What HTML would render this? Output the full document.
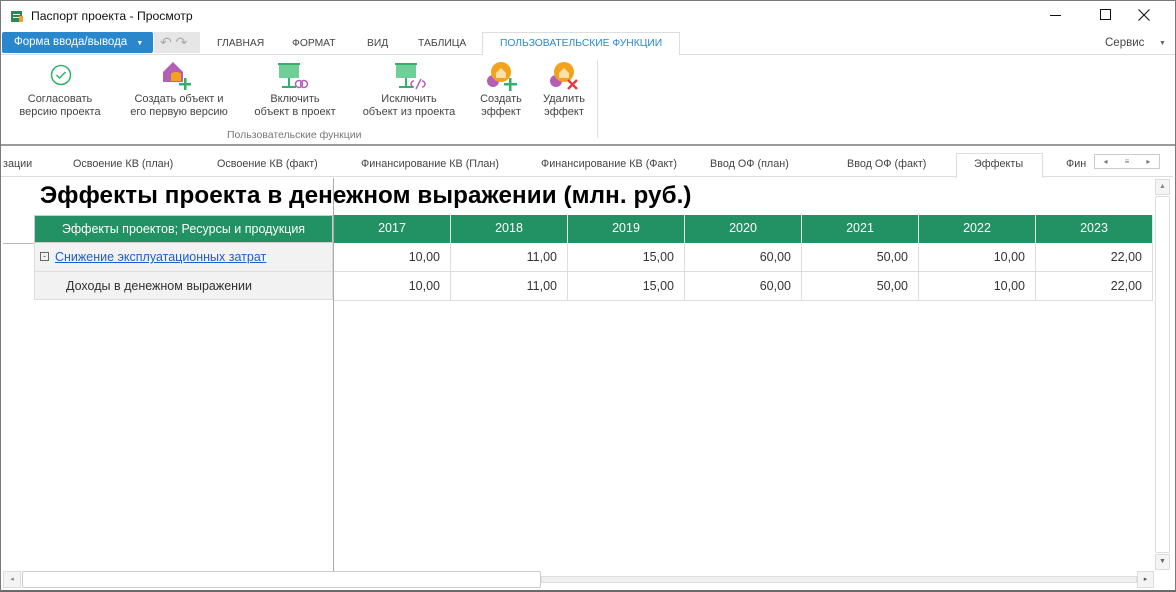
<!DOCTYPE html>
<html><head><meta charset="utf-8"><style>
*{box-sizing:border-box;margin:0;padding:0}
body{width:1176px;height:592px;overflow:hidden;background:#fff;font-family:"Liberation Sans",sans-serif;font-size:12px;color:#333;position:relative}
.a{position:absolute}
.frame{left:0;top:0;width:1176px;height:592px;border:1px solid #7a7a7a;border-bottom:2px solid #6a6a6a}
.rt{top:38px;font-size:10.3px;color:#444}
.btn{top:93px;text-align:center;font-size:11px;color:#444;line-height:13px}
.st{top:158px;font-size:10.8px;color:#444}
.hd{background:#229163;color:#fff;text-align:center;font-size:12.5px;line-height:27px;border-right:1px solid #d9ebe2;top:215px;height:28px}
.c{font-size:12.5px;text-align:right;padding-right:10px;border-right:1px solid #ddd;border-bottom:1px solid #ddd;height:29px;line-height:28px;color:#333}
</style></head><body>
<div class="a frame"></div>
<svg class="a" style="left:10px;top:9px" width="14" height="14"><rect x="1" y="2" width="11" height="11" fill="#2b8a4f"/><rect x="3" y="5" width="7" height="1" fill="#fff"/><rect x="3" y="8" width="7" height="1" fill="#fff"/><rect x="9" y="7" width="4" height="6" fill="#e8a33a"/></svg>
<div class="a" style="left:31px;top:9px;font-size:12.2px;color:#111">Паспорт проекта - Просмотр</div>
<div class="a" style="left:1050px;top:15px;width:11px;height:1px;background:#111"></div>
<div class="a" style="left:1100px;top:9px;width:11px;height:11px;border:1px solid #111"></div>
<svg class="a" style="left:1138px;top:9px" width="12" height="12"><path d="M0.5 0.5l11 11M11.5 0.5l-11 11" stroke="#111" stroke-width="1.1"/></svg>
<div class="a" style="left:2px;top:32px;width:151px;height:21px;background:#2b87cc;border-radius:2px;color:#fff;font-size:11.5px;line-height:21px;padding-left:12px">Форма ввода/вывода <span style="font-size:7px;margin-left:6px">▼</span></div>
<div class="a" style="left:154px;top:32px;width:46px;height:21px;background:#e6e6e6;color:#aaa;font-size:14px;line-height:20px;padding-left:6px">↶ ↷</div>
<div class="a rt" style="left:217px">ГЛАВНАЯ</div>
<div class="a rt" style="left:292px">ФОРМАТ</div>
<div class="a rt" style="left:367px">ВИД</div>
<div class="a rt" style="left:418px">ТАБЛИЦА</div>
<div class="a" style="left:482px;top:32px;width:198px;height:23px;border:1px solid #ddd;border-bottom:none;background:#fff"></div>
<div class="a rt" style="left:500px;color:#2b87cc">ПОЛЬЗОВАТЕЛЬСКИЕ ФУНКЦИИ</div>
<div class="a rt" style="left:1105px;font-size:11.5px;top:37px">Сервис</div>
<div class="a" style="left:1159px;top:40px;font-size:7px;color:#666">▼</div>
<div class="a" style="left:1px;top:54px;width:481px;height:1px;background:#ddd"></div>
<div class="a" style="left:680px;top:54px;width:495px;height:1px;background:#ddd"></div>
<svg class="a" style="left:50px;top:64px" width="22" height="22"><circle cx="11" cy="11" r="9.5" fill="none" stroke="#2fb36b" stroke-width="1.5"/><path d="M6.5 11l3 3 6-6" fill="none" stroke="#2fb36b" stroke-width="1.5"/></svg>
<svg class="a" style="left:162px;top:61px" width="32" height="30"><path d="M1 11L11 1l10 10v10H1z" fill="#b35fb5"/><ellipse cx="14" cy="13" rx="5" ry="2" fill="#f2a31b"/><rect x="9" y="13" width="10" height="7" fill="#f2a31b"/><rect x="22" y="17" width="2.5" height="12" fill="#2fb36b"/><rect x="17" y="22" width="12" height="2.5" fill="#2fb36b"/></svg>
<svg class="a" style="left:276px;top:63px" width="34" height="28"><rect x="2" y="0" width="22" height="2" fill="#2fb36b"/><rect x="3" y="2" width="20" height="13" fill="#6fcf97"/><rect x="12" y="15" width="2" height="9" fill="#2fb36b"/><rect x="6" y="23" width="14" height="2" fill="#2fb36b"/><circle cx="23" cy="21" r="3.5" fill="none" stroke="#b35fb5" stroke-width="1.5"/><circle cx="28" cy="21" r="3.5" fill="none" stroke="#b35fb5" stroke-width="1.5"/></svg>
<svg class="a" style="left:393px;top:63px" width="34" height="28"><rect x="2" y="0" width="22" height="2" fill="#2fb36b"/><rect x="3" y="2" width="20" height="13" fill="#6fcf97"/><rect x="12" y="15" width="2" height="9" fill="#2fb36b"/><rect x="6" y="23" width="14" height="2" fill="#2fb36b"/><path d="M21 18a3 3 0 1 0 0 6M29 18a3 3 0 1 1 0 6M23 26l5-10" fill="none" stroke="#b35fb5" stroke-width="1.5"/></svg>
<svg class="a" style="left:485px;top:60px" width="34" height="32"><circle cx="8" cy="21" r="6" fill="#b35fb5"/><circle cx="16" cy="12" r="10" fill="#f2a31b"/><path d="M11 13l5-5 5 5v5H11z" fill="#fce2a8"/><rect x="24" y="18" width="2.5" height="13" fill="#2fb36b"/><rect x="19" y="23" width="13" height="2.5" fill="#2fb36b"/></svg>
<svg class="a" style="left:548px;top:60px" width="34" height="32"><circle cx="8" cy="21" r="6" fill="#b35fb5"/><circle cx="16" cy="12" r="10" fill="#f2a31b"/><path d="M11 13l5-5 5 5v5H11z" fill="#fce2a8"/><path d="M20 20l9 9M29 20l-9 9" stroke="#e04040" stroke-width="2.5"/></svg>
<div class="a btn" style="left:10px;width:100px">Согласовать<br>версию проекта</div>
<div class="a btn" style="left:120px;width:118px">Создать объект и<br>его первую версию</div>
<div class="a btn" style="left:240px;width:110px">Включить<br>объект в проект</div>
<div class="a btn" style="left:350px;width:118px">Исключить<br>объект из проекта</div>
<div class="a btn" style="left:470px;width:62px">Создать<br>эффект</div>
<div class="a btn" style="left:533px;width:62px">Удалить<br>эффект</div>
<div class="a" style="left:227px;top:129px;font-size:10.5px;color:#777">Пользовательские функции</div>
<div class="a" style="left:597px;top:60px;width:1px;height:78px;background:#e0e0e0"></div>
<div class="a" style="left:1px;top:144px;width:1174px;height:2px;background:#9a9a9a"></div>
<div class="a st" style="left:3px">зации</div>
<div class="a st" style="left:73px">Освоение КВ (план)</div>
<div class="a st" style="left:217px">Освоение КВ (факт)</div>
<div class="a st" style="left:361px">Финансирование КВ (План)</div>
<div class="a st" style="left:541px">Финансирование КВ (Факт)</div>
<div class="a st" style="left:710px">Ввод ОФ  (план)</div>
<div class="a st" style="left:847px">Ввод ОФ  (факт)</div>
<div class="a" style="left:956px;top:153px;width:87px;height:25px;border:1px solid #ddd;border-bottom:none;background:#fff"></div>
<div class="a st" style="left:974px">Эффекты</div>
<div class="a st" style="left:1066px">Фин</div>
<div class="a" style="left:1094px;top:154px;width:66px;height:15px;border:1px solid #ccc;background:#fff;font-size:8px;color:#777;display:flex;justify-content:space-around;align-items:center"><span>◂</span><span>≡</span><span>▸</span></div>
<div class="a" style="left:1px;top:176px;width:955px;height:1px;background:#ddd"></div>
<div class="a" style="left:1043px;top:176px;width:130px;height:1px;background:#ddd"></div>
<div class="a" style="left:40px;top:182px;font-size:24.2px;font-weight:bold;color:#000;letter-spacing:0.1px">Эффекты проекта в денежном выражении (млн. руб.)</div>
<div class="a" style="left:3px;top:243px;width:31px;height:1px;background:#bbb"></div>
<div class="a" style="left:333px;top:178px;width:1px;height:393px;background:#aaa"></div>
<div class="a hd" style="left:34px;width:299px;border:1px solid #ccc">Эффекты проектов; Ресурсы и продукция</div>
<div class="a hd" style="left:334px;width:117px">2017</div>
<div class="a hd" style="left:451px;width:117px">2018</div>
<div class="a hd" style="left:568px;width:117px">2019</div>
<div class="a hd" style="left:685px;width:117px">2020</div>
<div class="a hd" style="left:802px;width:117px">2021</div>
<div class="a hd" style="left:919px;width:117px">2022</div>
<div class="a hd" style="left:1036px;width:117px">2023</div>
<div class="a" style="left:34px;top:243px;width:299px;height:57px;background:#f2f2f2;border:1px solid #ddd;border-top:none"></div>
<div class="a" style="left:34px;top:271px;width:299px;height:1px;background:#ddd"></div>
<div class="a" style="left:40px;top:252px;width:9px;height:9px;border:1px solid #666;font-size:9px;line-height:6px;text-align:center;color:#444">-</div>
<div class="a" style="left:55px;top:250px;font-size:12.5px;color:#1a5fd6;text-decoration:underline">Снижение эксплуатационных затрат</div>
<div class="a" style="left:66px;top:279px;font-size:12.5px;color:#333">Доходы в денежном выражении</div>
<div class="a" style="left:334px;top:243px;display:flex">
<div class="c" style="width:117px">10,00</div><div class="c" style="width:117px">11,00</div><div class="c" style="width:117px">15,00</div><div class="c" style="width:117px">60,00</div><div class="c" style="width:117px">50,00</div><div class="c" style="width:117px">10,00</div><div class="c" style="width:117px">22,00</div></div>
<div class="a" style="left:334px;top:272px;display:flex">
<div class="c" style="width:117px">10,00</div><div class="c" style="width:117px">11,00</div><div class="c" style="width:117px">15,00</div><div class="c" style="width:117px">60,00</div><div class="c" style="width:117px">50,00</div><div class="c" style="width:117px">10,00</div><div class="c" style="width:117px">22,00</div></div>
<div class="a" style="left:1155px;top:179px;width:15px;height:16px;border:1px solid #ddd;background:#f4f4f4;font-size:7px;color:#888;text-align:center;line-height:14px">▲</div>
<div class="a" style="left:1155px;top:196px;width:15px;height:357px;border:1px solid #ddd;border-radius:2px"></div>
<div class="a" style="left:1155px;top:554px;width:15px;height:16px;border:1px solid #ddd;background:#f4f4f4;font-size:7px;color:#666;text-align:center;line-height:14px">▼</div>
<div class="a" style="left:3px;top:571px;width:1167px;height:17px;background:#fff"></div>
<div class="a" style="left:3px;top:571px;width:18px;height:17px;border:1px solid #ddd;background:#f4f4f4;font-size:7px;color:#888;line-height:15px;text-align:center">◂</div>
<div class="a" style="left:22px;top:571px;width:519px;height:17px;border:1px solid #ccc;border-radius:2px;background:#fff"></div>
<div class="a" style="left:541px;top:576px;width:596px;height:7px;background:#f0f0f0;border:1px solid #ddd"></div>
<div class="a" style="left:1137px;top:571px;width:17px;height:17px;border:1px solid #ddd;background:#f4f4f4;font-size:7px;color:#555;line-height:15px;text-align:center">▸</div>
</body></html>
